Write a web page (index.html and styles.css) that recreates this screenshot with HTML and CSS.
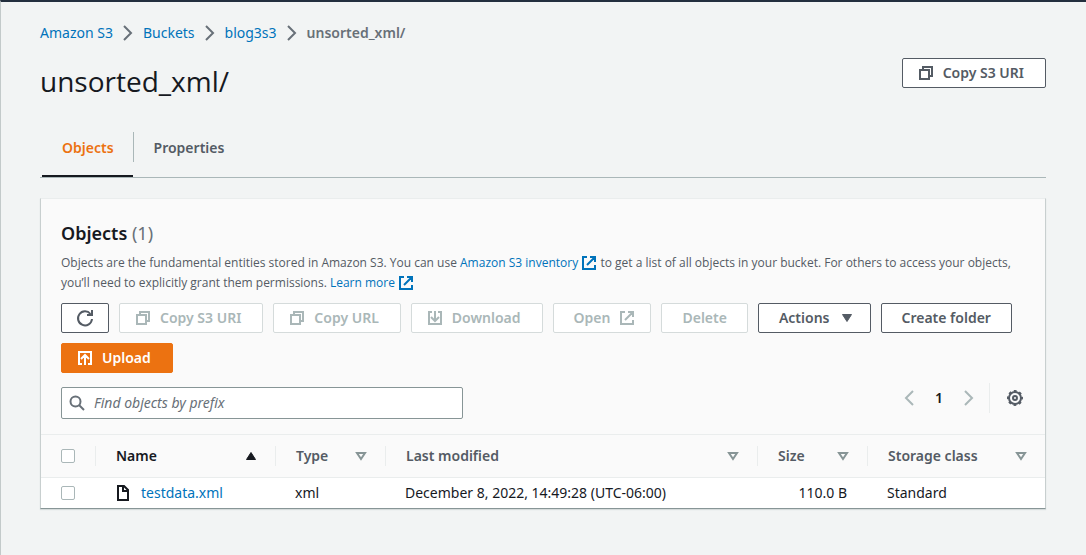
FILE: index.html
```html
<!DOCTYPE html>
<html lang="en">
<head>
<meta charset="utf-8">
<title>unsorted_xml/ - S3 bucket</title>
<link rel="stylesheet" href="styles.css">
</head>
<body>
<svg class="sprite" aria-hidden="true">
  <symbol id="copy" viewBox="0 0 16 16"><path d="M2 5h9v9H2z"/><path d="M5 5V2h9v9h-3"/></symbol>
  <symbol id="external" viewBox="0 0 16 16"><path d="M6 2H2v12h12v-4M9 2h5v5M6 10l8-8"/></symbol>
  <symbol id="download" viewBox="0 0 16 16"><path d="M5 2H2v12h12V2h-3M8 1v9M4 7l4 4 4-4"/></symbol>
  <symbol id="upload" viewBox="0 0 16 16"><path d="M5 14H2V2h12v12h-3M8 15V6M4 9l4-4 4 4"/></symbol>
  <symbol id="chevron" viewBox="0 0 16 16"><path d="M4 1l7 7-7 7"/></symbol>
  <symbol id="chevron-left" viewBox="0 0 16 16"><path d="M12 1L5 8l7 7"/></symbol>
  <symbol id="sort" viewBox="0 0 16 16"><path d="M4 5h8l-4 6z"/></symbol>
</svg>
<main class="page">
  <nav class="breadcrumbs" aria-label="Breadcrumbs">
    <a href="#">Amazon S3</a><svg class="icon"><use href="#chevron"/></svg>
    <a href="#">Buckets</a><svg class="icon"><use href="#chevron"/></svg>
    <a href="#">blog3s3</a><svg class="icon"><use href="#chevron"/></svg>
    <span class="current">unsorted_xml/</span>
  </nav>
  <header class="page-header">
    <h1>unsorted_xml/</h1>
    <button class="btn icon-start" type="button"><svg class="icon"><use href="#copy"/></svg>Copy S3 URI</button>
  </header>
  <nav class="tabs" aria-label="Sections">
    <a class="tab active" href="#">Objects</a>
    <a class="tab" href="#">Properties</a>
  </nav>
  <section class="card">
    <div class="card-header">
      <h2>Objects <span class="count">(1)</span></h2>
      <p class="description">Objects are the fundamental entities stored in Amazon S3. You can use <a href="#">Amazon S3 inventory <svg class="icon"><use href="#external"/></svg></a> to get a list of all objects in your bucket. For others to access your objects, you’ll need to explicitly grant them permissions. <a href="#">Learn more <svg class="icon"><use href="#external"/></svg></a></p>
      <div class="actions">
        <button class="btn btn-icon" type="button" aria-label="Refresh"><svg class="icon" viewBox="0 0 16 16"><path d="M15 9A7 7 0 1 1 13.500 4M15 0v5h-5"/></svg></button>
        <button class="btn icon-start" type="button" disabled><svg class="icon"><use href="#copy"/></svg>Copy S3 URI</button>
        <button class="btn icon-start" type="button" disabled><svg class="icon"><use href="#copy"/></svg>Copy URL</button>
        <button class="btn icon-start" type="button" disabled><svg class="icon"><use href="#download"/></svg>Download</button>
        <button class="btn icon-end" type="button" disabled>Open<svg class="icon"><use href="#external"/></svg></button>
        <button class="btn" type="button" disabled>Delete</button>
        <button class="btn icon-end" type="button">Actions<svg class="icon solid" viewBox="0 0 16 16"><path d="M3.500 4.500h9l-4.500 7z"/></svg></button>
        <button class="btn" type="button">Create folder</button>
        <button class="btn btn-primary icon-start" type="button"><svg class="icon"><use href="#upload"/></svg>Upload</button>
      </div>
      <div class="tools">
        <label class="search">
          <svg class="icon" viewBox="0 0 16 16"><circle cx="6.500" cy="6.500" r="5"/><path d="M10 10l5 5"/></svg>
          <input type="text" placeholder="Find objects by prefix" aria-label="Find objects by prefix">
        </label>
        <div class="pagination">
          <button class="plain" type="button" aria-label="Previous page" disabled><svg class="icon"><use href="#chevron-left"/></svg></button>
          <button class="plain page-number" type="button">1</button>
          <button class="plain" type="button" aria-label="Next page" disabled><svg class="icon"><use href="#chevron"/></svg></button>
          <div class="settings">
            <button class="plain" type="button" aria-label="Preferences"><svg class="icon" viewBox="0 0 16 16"><circle cx="8" cy="8" r="6"/><circle cx="8" cy="8" r="7" stroke-dasharray="2.749" stroke-dashoffset="1.374"/><circle cx="8" cy="8" r="2"/></svg></button>
          </div>
        </div>
      </div>
    </div>
    <table>
      <colgroup><col class="col-check"><col class="col-name"><col class="col-small"><col><col class="col-small"><col class="col-class"></colgroup>
      <thead>
        <tr>
          <th><input type="checkbox" aria-label="Select all objects"></th>
          <th aria-sort="ascending"><div class="heading sorted">Name<svg class="icon solid" viewBox="0 0 16 16"><path d="M3.500 11.500h9L8 4.500z"/></svg></div></th>
          <th><div class="heading">Type<svg class="icon"><use href="#sort"/></svg></div></th>
          <th><div class="heading">Last modified<svg class="icon"><use href="#sort"/></svg></div></th>
          <th><div class="heading">Size<svg class="icon"><use href="#sort"/></svg></div></th>
          <th><div class="heading">Storage class<svg class="icon"><use href="#sort"/></svg></div></th>
        </tr>
      </thead>
      <tbody>
        <tr>
          <td><input type="checkbox" aria-label="Select testdata.xml"></td>
          <td><div class="file"><svg class="icon" viewBox="0 0 16 16"><path d="M3 1h6l4 4v10H3zM8 1v5h5"/></svg><a href="#">testdata.xml</a></div></td>
          <td>xml</td>
          <td>December 8, 2022, 14:49:28 (UTC-06:00)</td>
          <td class="number">110.0 B</td>
          <td>Standard</td>
        </tr>
      </tbody>
    </table>
  </section>
</main>
</body>
</html>
```
FILE: styles.css
```css
* { box-sizing: border-box; }
body {
  margin: 0;
  min-height: 100vh;
  border-top: 2px solid #232f3e;
  border-left: 1px solid #c3caca;
  background: #f2f4f4;
  color: #16191f;
  font: 14px/20px "Noto Sans", "Open Sans", sans-serif;
}
a { color: #0073bb; text-decoration: none; }
button, input { font: inherit; }
h1, h2, p { margin: 0; }
.sprite { display: none; }
.icon {
  flex: none;
  width: 16px;
  height: 16px;
  fill: none;
  stroke: currentColor;
  stroke-width: 2;
  overflow: visible;
}
.icon.solid { fill: currentColor; stroke-width: 1; }

.page { padding: 21px 40px 40px 39px; }
.breadcrumbs { display: flex; align-items: center; gap: 7px; color: #687078; }
.current { font-weight: 600; }
.page-header {
  display: flex;
  justify-content: space-between;
  align-items: flex-start;
  padding-top: 15px;
}
h1 { padding-top: 5px; font: 400 28px/36px "Open Sans", "Noto Sans", sans-serif; }

.btn {
  display: inline-flex;
  align-items: center;
  justify-content: center;
  gap: 9px;
  height: 30px;
  padding: 0 20px;
  border: 1px solid #545b64;
  border-radius: 2px;
  background: #fff;
  color: #545b64;
  font-weight: 600;
  white-space: nowrap;
}
.btn:disabled { border-color: #d5dbdb; color: #aab7b8; }
.icon-start { padding: 0 21px 0 15px; }
.icon-end { padding-right: 15px; }
.btn-icon { padding: 0 15px; }
.btn-primary { border-color: #ec7211; background: #ec7211; color: #fff; }

.tabs { display: flex; margin-top: 33px; padding-left: 2px; border-bottom: 1px solid #aab7b8; }
.tab {
  position: relative;
  padding: 6px 21px 19px;
  color: #545b64;
  font-weight: 600;
}
.tab.active { color: #ec7211; border-bottom: 2px solid #16191f; padding: 6px 19px 17px 20px; }
.tab.active::after {
  content: "";
  position: absolute;
  top: 0;
  right: -1px;
  height: 30px;
  border-right: 1px solid #aab7b8;
}

.card {
  margin-top: 20px;
  border: 1px solid #eaeded;
  border-left-color: #c8cfcf;
  border-right-color: #c8cfcf;
  border-bottom-color: #879596;
  background: #fff;
  box-shadow: 0 1px 1px #d5dbdb;
}
.card-header { padding: 23px 20px 15px; background: #fafafa; }
h2 { font-size: 18px; line-height: 22px; font-weight: 600; }
.count { color: #687078; font-weight: 400; }
.description { padding: 9px 0 10px; color: #545b64; font: 12px/20px "Open Sans", "Noto Sans", sans-serif; }
.description .icon { vertical-align: -4px; }
.actions { display: flex; flex-wrap: wrap; gap: 10px; }
.tools { display: flex; justify-content: space-between; align-items: flex-start; padding-top: 10px; }
.search {
  display: flex;
  align-items: center;
  gap: 9px;
  width: 402px;
  height: 32px;
  margin-top: 4px;
  padding: 0 7px;
  border: 1px solid #879596;
  border-radius: 2px;
  background: #fff;
  color: #687078;
}
.search input { flex: 1; min-width: 0; border: 0; padding: 0; outline: 0; background: none; }
.search input::placeholder { color: #687078; font-style: italic; opacity: 1; }
.pagination { display: flex; align-items: center; gap: 6px; height: 30px; }
.plain {
  display: grid;
  place-items: center;
  min-width: 24px;
  height: 24px;
  padding: 0;
  border: 0;
  background: none;
  color: #545b64;
}
.plain:disabled { color: #aab7b8; }
.page-number { color: #16191f; font-weight: 600; }
.settings {
  display: flex;
  align-items: center;
  height: 30px;
  margin-left: 2px;
  padding-left: 15px;
  border-left: 1px solid #eaeded;
}
.settings .plain { min-width: 20px; }

table { width: 100%; border-collapse: collapse; table-layout: fixed; }
.col-check { width: 54px; }
.col-name { width: 180px; }
.col-small { width: 110px; }
.col-class { width: 178px; }
thead { background: #fafafa; }
th { height: 43px; padding: 0; border-top: 1px solid #eaeded; border-bottom: 1px solid #eaeded; color: #545b64; font-weight: 600; text-align: left; }
td { height: 30px; padding: 0 20px; white-space: nowrap; }
th:first-child, td:first-child { padding: 0 20px; }
.heading {
  display: flex;
  align-items: center;
  justify-content: space-between;
  padding: 0 16px 0 20px;
  border-left: 1px solid #eaeded;
}
.heading .icon:not(.solid) { color: #879596; }
.sorted { color: #16191f; }
.number { text-align: right; }
.file { display: flex; align-items: center; gap: 10px; }
input[type="checkbox"] {
  display: block;
  appearance: none;
  width: 14px;
  height: 14px;
  margin: 0;
  border: 1px solid #aab7b8;
  border-radius: 2px;
  background: #fff;
}
```
